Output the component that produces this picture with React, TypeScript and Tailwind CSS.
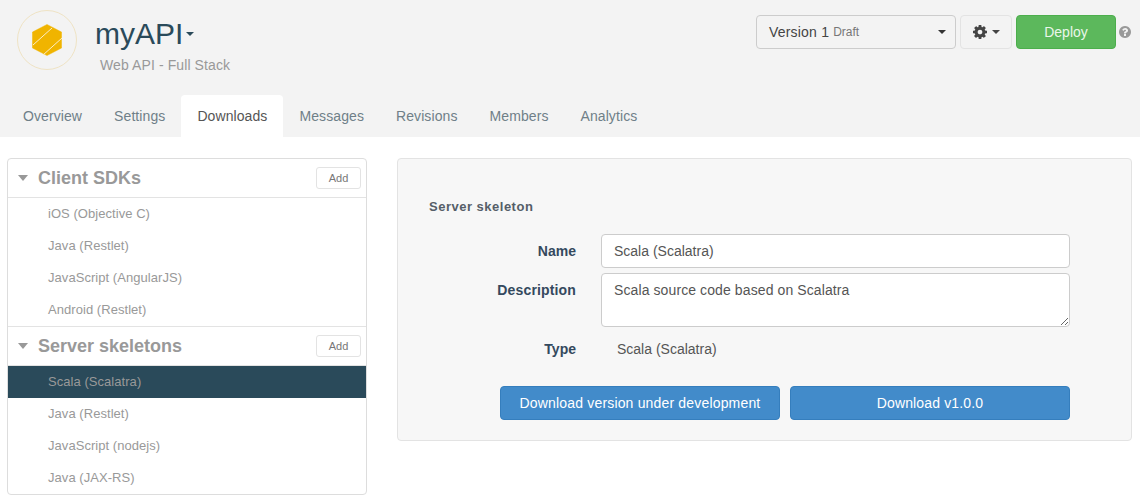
const Caret = ({ className = "" }: { className?: string }) => (
  <span className={`inline-block w-0 h-0 border-x-[4px] border-x-transparent border-t-[4px] ${className}`} />
);

const Gear = () => (
  <svg width="14" height="14" viewBox="0 0 1536 1536" fill="#444">
    <path d="M1024 768q0-106-75-181t-181-75-181 75-75 181 75 181 181 75 181-75 75-181zm512-109v222q0 12-8 23t-20 13l-185 28q-19 54-39 91 35 50 107 138 10 12 10 25t-9 23q-27 37-99 108t-94 71q-12 0-26-9l-138-108q-44 23-91 38-16 136-29 186-7 28-36 28h-222q-14 0-24.5-8.5t-11.5-21.5l-28-184q-49-16-90-37l-141 107q-10 9-25 9-14 0-25-11-126-114-165-168-7-10-7-23 0-12 8-23 15-21 51-66.5t54-70.5q-27-50-41-99l-183-27q-13-2-21-12.5t-8-23.5v-222q0-12 8-23t19-13l186-28q14-46 39-92-40-57-107-138-10-12-10-24 0-10 9-23 26-36 98.5-107.5t94.5-71.5q13 0 26 10l138 107q44-23 91-38 16-136 29-186 7-28 36-28h222q14 0 24.5 8.5t11.5 21.5l28 184q49 16 90 37l142-107q9-9 24-9 13 0 25 10 129 119 165 170 7 8 7 22 0 12-8 23-15 21-51 66.5t-54 70.5q26 50 41 98l183 28q13 2 21 12.5t8 23.5z" />
  </svg>
);

const Help = () => (
  <svg width="12" height="12" viewBox="0 0 1536 1536" fill="#999">
    <path d="M896 1248v-192q0-14-9-23t-23-9h-192q-14 0-23 9t-9 23v192q0 14 9 23t23 9h192q14 0 23-9t9-23zm256-672q0-88-55.5-163t-138.500-116-170-41q-243 0-371 213-15 24 8 42l132 100q7 6 19 6 16 0 25-12 53-68 86-92 34-24 86-24 48 0 85.500 26t37.500 59q0 38-20 61t-68 45q-63 28-115.500 86.500t-52.500 125.500v36q0 14 9 23t23 9h192q14 0 23-9t9-23q0-19 21.500-49.500t54.500-49.500q32-18 49-28.500t46-35 44.500-48 28-60.500 12.500-81zm384 192q0 209-103 385.500t-279.500 279.500-385.500 103-385.500-103-279.500-279.500-103-385.500 103-385.500 279.500-279.500 385.500-103 385.500 103 279.500 279.500 103 385.500z" />
  </svg>
);

const Logo = () => (
  <div className="w-[60px] h-[60px] rounded-full border border-[#efe3c4] flex items-center justify-center">
    <svg width="30" height="32" viewBox="0 0 30 32">
      <polygon points="15,0.500 29.500,8 29.500,24 15,31.500 0.500,24 0.500,8" fill="#f0b400" stroke="#f0b400" strokeWidth="0.500" strokeLinejoin="round" />
      <path d="M1 21 L20 4 M11 31 L30 14" stroke="#fbeec6" strokeWidth="1" fill="none" />
    </svg>
  </div>
);

const tabs = ["Overview", "Settings", "Downloads", "Messages", "Revisions", "Members", "Analytics"];

const Section = ({ title, items, active, last }: { title: string; items: string[]; active?: string; last?: boolean }) => (
  <div className={last ? "" : "border-b border-[#e3e3e3]"}>
    <div className="h-[39px] border-b border-[#e3e3e3] flex items-center pl-[10px] pr-[5px]">
      <Caret className="border-x-[5.5px] border-t-[6px] border-t-[#999] mr-[10px]" />
      <span className="text-[18px] font-bold text-[#999] flex-1">{title}</span>
      <button className="w-[45px] h-[22px] rounded-[3px] border border-[#e3e3e3] bg-white text-[11px] text-[#777]">Add</button>
    </div>
    {items.map((it) => (
      <div
        key={it}
        className={`h-[32px] pl-[40px] pb-[1px] flex items-center text-[13px] tracking-[0.05px] text-[#999] ${it === active ? "bg-[#2a4a5a]" : ""}`}
      >
        {it}
      </div>
    ))}
  </div>
);

export default function App() {
  return (
    <div className="w-[1140px] h-[504px] bg-white overflow-hidden text-[14px] text-[#555]" style={{ fontFamily: '"Liberation Sans", Arial, sans-serif' }}>
      <header className="h-[137px] bg-[#f3f3f3] flex flex-col justify-between">
        <div className="flex justify-between items-start">
          <div className="flex pl-[17px] pt-[10px]">
            <Logo />
            <div className="ml-[18px] pt-[6px]">
              <div className="flex items-center text-[30px] leading-[36px] text-[#2a4a5a]">
                myAPI
                <Caret className="ml-[3px] border-t-[#2a4a5a]" />
              </div>
              <div className="ml-[5px] mt-[3px] text-[14px] leading-[20px] tracking-[0.1px] text-[#999]">Web API - Full Stack</div>
            </div>
          </div>
          <div className="flex items-center pt-[15px] pr-[9px]">
            <div className="w-[200px] h-[34px] rounded-[4px] border border-[#ccc] pl-[12px] pr-[5px] flex items-center">
              <span className="text-[#444] tracking-[0.2px]">Version 1</span>
              <span className="ml-[4px] text-[12px] text-[#777] flex-1">Draft</span>
              <Caret className="border-t-[#333] mr-[4px]" />
            </div>
            <div className="ml-[4px] w-[52px] h-[34px] rounded-[4px] border border-[#e3e3e3] flex items-center justify-center gap-[5px]">
              <Gear />
              <Caret className="border-t-[#444]" />
            </div>
            <button className="ml-[4px] w-[100px] h-[34px] rounded-[4px] bg-[#5cb85c] border border-[#4cae4c] text-[#eaf6ea]">Deploy</button>
            <span className="ml-[3px]"><Help /></span>
          </div>
        </div>
        <nav className="flex pl-[7px]">
          {tabs.map((t) => (
            <div
              key={t}
              className={`h-[42px] px-[16px] flex items-center rounded-t-[4px] tracking-[0.09px] ${t === "Downloads" ? "bg-white text-[#555]" : "text-[#6f7f88]"}`}
            >
              {t}
            </div>
          ))}
        </nav>
      </header>
      <main className="flex items-start pl-[7px] pt-[21px] gap-[30px]">
        <aside className="w-[360px] border border-[#ddd] rounded-[4px] bg-white overflow-hidden">
          <Section title="Client SDKs" items={["iOS (Objective C)", "Java (Restlet)", "JavaScript (AngularJS)", "Android (Restlet)"]} />
          <Section title="Server skeletons" items={["Scala (Scalatra)", "Java (Restlet)", "JavaScript (nodejs)", "Java (JAX-RS)"]} active="Scala (Scalatra)" last />
        </aside>
        <section className="w-[735px] h-[283px] border border-[#e3e3e3] rounded-[4px] bg-[#f7f7f7] pt-[38px] pl-[31px]">
          <h3 className="text-[13px] leading-[20px] font-bold tracking-[0.5px] text-[#555e68]">Server skeleton</h3>
          <div className="mt-[17px] flex flex-col">
            <div className="flex items-center h-[34px]">
              <label className="w-[147px] text-right font-bold text-[#34495e]">Name</label>
              <input readOnly value="Scala (Scalatra)" className="ml-[25px] w-[469px] h-[34px] rounded-[4px] border border-[#ccc] bg-white px-[12px] text-[#555] outline-none" />
            </div>
            <div className="flex items-start mt-[5px]">
              <label className="w-[147px] text-right font-bold text-[#34495e] pt-[7px] leading-[20px] tracking-[0.15px]">Description</label>
              <textarea readOnly value="Scala source code based on Scalatra" className="ml-[25px] w-[469px] h-[54px] rounded-[4px] border border-[#ccc] bg-white px-[12px] py-[6px] leading-[20px] tracking-[0.1px] text-[#555] outline-none block" />
            </div>
            <div className="flex items-center h-[20px] mt-[12px]">
              <label className="w-[147px] text-right font-bold text-[#34495e]">Type</label>
              <span className="ml-[41px] text-[#555]">Scala (Scalatra)</span>
            </div>
            <div className="flex mt-[27px] ml-[71px] gap-[10px]">
              <button className="w-[280px] h-[34px] rounded-[4px] bg-[#428bca] border border-[#357ebd] text-white tracking-[0.17px]">Download version under development</button>
              <button className="w-[280px] h-[34px] rounded-[4px] bg-[#428bca] border border-[#357ebd] text-white tracking-[0.15px]">Download v1.0.0</button>
            </div>
          </div>
        </section>
      </main>
    </div>
  );
}
